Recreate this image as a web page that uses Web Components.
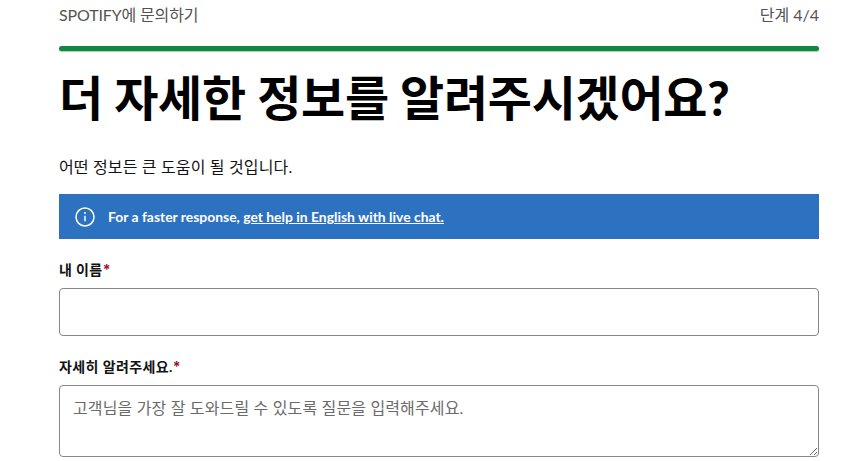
<!DOCTYPE html>
<html lang="ko">
<head>
<meta charset="utf-8">
<title>SPOTIFY에 문의하기</title>
<style>
  html, body { margin: 0; background: #fff; overflow: hidden; }
  body { font-family: "Lato", "Noto Sans CJK KR", sans-serif; color: #000; }
</style>
</head>
<body>
<contact-page>
  <step-header step="단계 4/4">SPOTIFY에 문의하기</step-header>
  <h-title>더 자세한 정보를 알려주시겠어요<b>?</b></h-title>
  <sub-text>어떤 정보든 큰 도움이 될 것입니다.</sub-text>
  <info-banner>For a faster response, <a href="#">get help in English with live chat.</a></info-banner>
  <form-field label="내 이름"></form-field>
  <form-field label="자세히 알려주세요." multiline placeholder="고객님을 가장 잘 도와드릴 수 있도록 질문을 입력해주세요."></form-field>
</contact-page>
<script>
class ContactPage extends HTMLElement {
    constructor() {
        super();
        this.attachShadow({mode: 'open'});
        this.shadowRoot.innerHTML = `
<style>
    :host{ display:flex; flex-direction:column; width:760px; margin-left:59px; }
</style>
<slot></slot>`;
    }
}
customElements.define('contact-page', ContactPage);

class StepHeader extends HTMLElement {
    constructor() {
        super();
        this.attachShadow({mode: 'open'});
        this.shadowRoot.innerHTML = `
<style>
    :host{ display:block; padding-top:4px; }
    .row{
        display:flex;
        justify-content:space-between;
        font-size:16px;
        line-height:22px;
        color:#535353;
    }
    .title{ letter-spacing:-.15px; }
    .bar{
        height:5px;
        margin-top:20px;
        border-radius:3px;
        background:#0d8a3e;
        box-shadow:0 1px 0 rgba(13,138,62,.35);
    }
</style>
<div class="row"><span class="title"><slot></slot></span><span id="step"></span></div>
<div class="bar"></div>`;
        this.shadowRoot.querySelector('#step').textContent = this.getAttribute('step');
    }
}
customElements.define('step-header', StepHeader);

class HTitle extends HTMLElement {
    constructor() {
        super();
        this.attachShadow({mode: 'open'});
        this.shadowRoot.innerHTML = `
<style>
    :host{
        display:block;
        margin-top:19px;
        font-size:48px;
        line-height:56px;
        font-weight:700;
        letter-spacing:-.3px;
        color:#000;
    }
    ::slotted(b){ font-weight:900; }
</style>
<slot></slot>`;
    }
}
customElements.define('h-title', HTitle);

class SubText extends HTMLElement {
    constructor() {
        super();
        this.attachShadow({mode: 'open'});
        this.shadowRoot.innerHTML = `
<style>
    :host{
        display:block;
        margin-top:30px;
        font-size:16px;
        line-height:22px;
        letter-spacing:.15px;
        color:#121212;
    }
</style>
<slot></slot>`;
    }
}
customElements.define('sub-text', SubText);

class InfoBanner extends HTMLElement {
    constructor() {
        super();
        this.attachShadow({mode: 'open'});
        this.shadowRoot.innerHTML = `
<style>
    :host{
        display:flex;
        align-items:center;
        gap:13px;
        box-sizing:border-box;
        height:45px;
        margin-top:16px;
        padding-left:16px;
        background:#2d72c0;
        color:#fff;
        font-size:13.9px;
        font-weight:700;
    }
    svg{ width:20px; height:20px; flex:none; }
    ::slotted(a){ color:#fff; text-decoration:underline; }
</style>
<svg viewBox="0 0 20 20" fill="none" stroke="#fff">
    <circle cx="10" cy="10" r="9" stroke-width="1.5"/>
    <path d="M10 8.8v5.4" stroke-width="1.5"/>
    <circle cx="10" cy="6" r="1" fill="#fff" stroke="none"/>
</svg>
<span><slot></slot></span>`;
    }
}
customElements.define('info-banner', InfoBanner);

class FormField extends HTMLElement {
    constructor() {
        super();
        this.attachShadow({mode: 'open'});
        const multi = this.hasAttribute('multiline');
        const ph = this.getAttribute('placeholder') || '';
        this.shadowRoot.innerHTML = `
<style>
    :host{ display:block; margin-top:21px; }
    label{
        display:block;
        font-size:14px;
        line-height:20px;
        font-weight:700;
        letter-spacing:.4px;
        color:#121212;
        margin-bottom:8px;
    }
    label span{ color:#a3132a; font-family:"Inter",sans-serif; }
    input, textarea{
        display:block;
        box-sizing:border-box;
        width:100%;
        margin:0;
        padding:10px 13px;
        border:1px solid #878787;
        border-radius:4px;
        background:#fff;
        font:16px/24px "Lato","Noto Sans CJK KR",sans-serif;
        letter-spacing:.15px;
        color:#121212;
        outline:none;
    }
    input{ height:48px; }
    textarea{ height:72px; }
    ::placeholder{ color:#6a6a6a; opacity:1; }
</style>
<label for="f">${this.getAttribute('label')}<span>*</span></label>
${multi ? `<textarea id="f" placeholder="${ph}"></textarea>` : `<input id="f" type="text">`}`;
    }
}
customElements.define('form-field', FormField);
</script>
</body>
</html>
